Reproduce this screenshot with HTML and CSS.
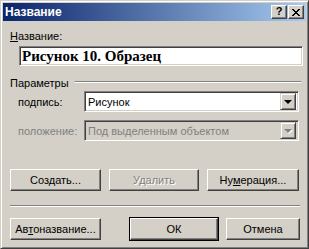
FILE: index.html
```html
<!DOCTYPE html>
<html lang="ru">
<head>
  <meta charset="UTF-8">
  <title>Название</title>
  <link rel="stylesheet" href="styles.css">
</head>
<body>

  <div class="window">
    <div class="titlebar">
      <span class="title">Название</span>
      <div class="title-btns">
        <span class="tbtn help">?</span>
        <span class="tbtn">
          <svg width="8" height="7" viewBox="0 0 8 7" shape-rendering="crispEdges">
            <path d="M0 0h2v1h1v1h2v-1h1v-1h2v1h-1v1h-1v1h-1v1h1v1h1v1h1v1h-2v-1h-1v-1h-2v1h-1v1h-2v-1h1v-1h1v-1h1v-1h-1v-1h-1v-1h-1z" fill="#000"/>
          </svg>
        </span>
      </div>
    </div>

    <div class="content">
      <div class="field-label"><u>Н</u>азвание:</div>
      <div class="caption-input">Рисунок 10. Образец</div>

      <div class="group-head">
        <span>Параметры</span>
        <span class="groove"></span>
      </div>

      <div class="row">
        <span class="row-label">по<u>д</u>пись:</span>
        <div class="combo">
          <span class="combo-text">Рисунок</span>
          <span class="combo-btn"><span class="arrow"></span></span>
        </div>
      </div>

      <div class="row disabled">
        <span class="row-label">положение:</span>
        <div class="combo">
          <span class="combo-text">Под выделенным объектом</span>
          <span class="combo-btn"><span class="arrow"></span></span>
        </div>
      </div>

      <div class="btn-grid">
        <button class="btn">Соз<u>д</u>ать...</button>
        <button class="btn disabled">Удалить</button>
        <button class="btn">Ну<u>м</u>ерация...</button>
      </div>

      <div class="sep"></div>

      <div class="btn-bottom">
        <button class="btn">Ав<u>т</u>оназвание...</button>
        <button class="btn default">ОК</button>
        <button class="btn cancel">Отмена</button>
      </div>
    </div>
  </div>

</body>
</html>
```

FILE: styles.css
```css
body {
  margin: 0;
  padding: 0;
  background-color: #d4d0c8;
  font-family: "Liberation Sans", Arial, sans-serif;
  font-size: 11px;
  color: #000;
}

.window {
  width: 309px;
  height: 249px;
  box-sizing: border-box;
  background-color: #d4d0c8;
  border: 1px solid;
  border-color: #d4d0c8 #404040 #404040 #d4d0c8;
  box-shadow: inset 1px 1px #fff, inset -1px -1px #808080;
  padding: 2px;
}

.titlebar {
  height: 18px;
  background: linear-gradient(90deg, #0a246a, #a6caf0);
  display: flex;
  align-items: center;
  justify-content: space-between;
  padding: 0 2px 0 2px;
}

.title {
  color: #fff;
  font-weight: bold;
  font-size: 12px;
}

.title-btns {
  display: flex;
  gap: 1px;
}

.tbtn {
  width: 16px;
  height: 14px;
  box-sizing: border-box;
  background-color: #d4d0c8;
  border: 1px solid;
  border-color: #fff #404040 #404040 #fff;
  box-shadow: inset -1px -1px #808080;
  display: flex;
  align-items: center;
  justify-content: center;
}

.tbtn.help {
  font-weight: bold;
  font-size: 11px;
  line-height: 1;
  padding-bottom: 1px;
}

.content {
  padding: 0 3px 0 7px;
}

.field-label {
  margin-top: 9px;
  line-height: 13px;
}

u {
  text-decoration-thickness: 1px;
  text-underline-offset: 1px;
}

.caption-input {
  margin: 3px 0 0 9px;
  height: 20px;
  box-sizing: border-box;
  background-color: #fff;
  border: 1px solid;
  border-color: #808080 #fff #fff #808080;
  box-shadow: inset 1px 1px #404040, inset -1px -1px #d4d0c8;
  font-family: "Liberation Serif", "Times New Roman", serif;
  font-weight: bold;
  font-size: 15px;
  line-height: 18px;
  padding-left: 2px;
  white-space: nowrap;
}

.group-head {
  margin-top: 11px;
  display: flex;
  align-items: flex-start;
  line-height: 13px;
}

.groove {
  flex: 1;
  margin: 4px 2px 0 6px;
  border-top: 1px solid #808080;
  border-bottom: 1px solid #fff;
}

.row {
  display: flex;
  align-items: center;
  padding-left: 8px;
  margin-top: 1px;
}

.row + .row {
  margin-top: 8px;
}

.row-label {
  width: 66px;
}

.combo {
  width: 215px;
  height: 21px;
  box-sizing: border-box;
  background-color: #fff;
  border: 1px solid;
  border-color: #808080 #fff #fff #808080;
  box-shadow: inset 1px 1px #404040, inset -1px -1px #d4d0c8;
  display: flex;
  align-items: center;
  justify-content: space-between;
  padding: 2px;
}

.combo-text {
  padding-left: 1px;
}

.combo-btn {
  width: 16px;
  height: 17px;
  box-sizing: border-box;
  background-color: #d4d0c8;
  border: 1px solid;
  border-color: #d4d0c8 #404040 #404040 #d4d0c8;
  box-shadow: inset 1px 1px #fff, inset -1px -1px #808080;
  display: flex;
  align-items: center;
  justify-content: center;
}

.arrow {
  width: 0;
  height: 0;
  border-left: 4px solid transparent;
  border-right: 4px solid transparent;
  border-top: 4px solid #000;
  margin-top: 1px;
}

.row.disabled .row-label,
.row.disabled .combo-text {
  color: #808080;
}

.row.disabled .combo {
  background-color: #d4d0c8;
}

.row.disabled .arrow {
  border-top-color: #808080;
  filter: drop-shadow(1px 1px 0 #fff);
}

.btn {
  font-family: "Liberation Sans", Arial, sans-serif;
  font-size: 11px;
  color: #000;
  height: 22px;
  padding: 0;
  background-color: #d4d0c8;
  border: 1px solid;
  border-color: #fff #404040 #404040 #fff;
  box-shadow: inset -1px -1px #808080;
  cursor: pointer;
}

.btn.disabled {
  color: #808080;
  text-shadow: 1px 1px 0 #fff;
}

.btn-grid {
  margin-top: 28px;
  display: grid;
  grid-template-columns: 91px 90px 92px;
  gap: 8px;
}

.sep {
  margin-top: 14px;
  width: 290px;
  border-top: 1px solid #808080;
  border-bottom: 1px solid #fff;
}

.btn-bottom {
  margin-top: 11px;
  width: 290px;
  display: flex;
  gap: 8px;
}

.btn-bottom .btn {
  width: 91px;
}

.btn-bottom .btn.default {
  width: 88px;
  margin-left: auto;
  outline: 1px solid #000;
  outline-offset: 0;
  border-color: #fff #404040 #404040 #fff;
}

.btn-bottom .btn.cancel {
  width: 74px;
}
```
